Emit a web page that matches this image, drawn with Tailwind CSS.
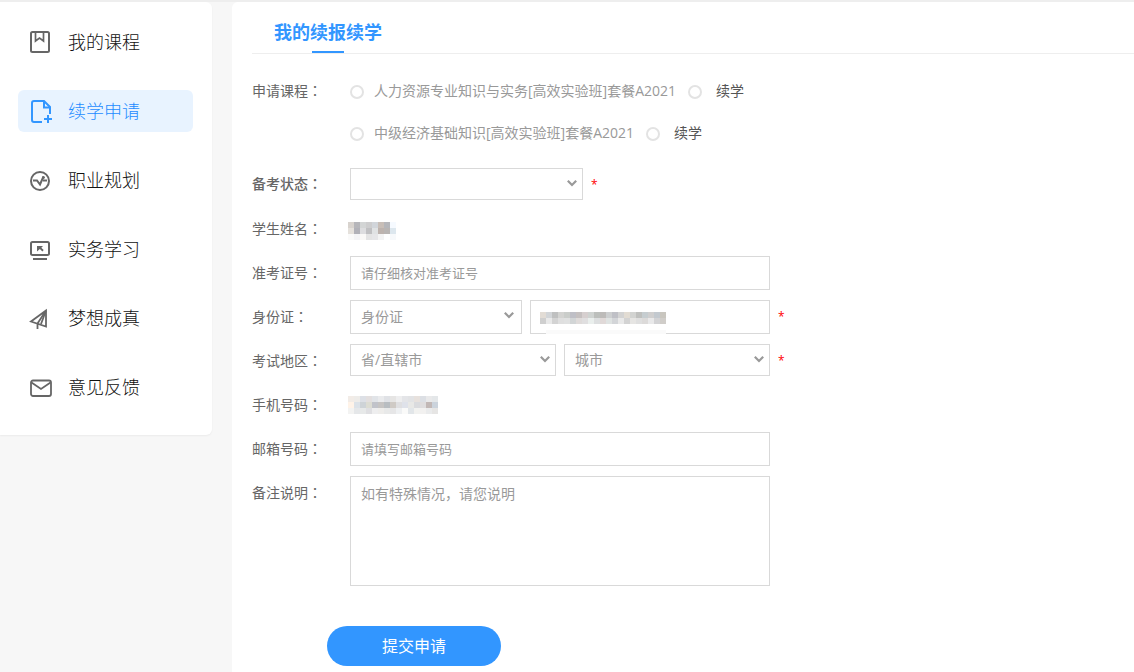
<!DOCTYPE html>
<html lang="zh-CN">
<head>
    <meta charset="UTF-8">
    <meta name="viewport" content="width=device-width, initial-scale=1.0">
    <title>我的续报续学</title>
    <script src="https://cdn.jsdelivr.net/npm/@tailwindcss/browser@4"></script>
</head>
<body class="min-h-screen border-t-2 border-[#eeeeee] bg-[#f7f7f7] font-['Open_Sans','Noto_Sans_CJK_SC',sans-serif] text-sm text-[#666666] flex items-start gap-5">

    <!-- 侧边菜单 -->
    <nav class="w-[212px] shrink-0 rounded-r-md bg-white pt-[19px] pb-[27px] pl-[18px] pr-[19px] flex flex-col gap-[27px] text-lg font-light text-[#111111] shadow-xs shadow-black/5">
        <a href="#" class="flex h-[42px] items-center gap-4 rounded-md pl-[10px]">
            <svg class="size-6 text-[#666666]" viewBox="0 0 24 24" fill="none" stroke="currentColor" stroke-width="2">
                <rect x="3" y="2" width="18" height="20" rx="1.5"/>
                <path d="M7.500 2v9l4-3 4 3V2" stroke-width="1.700"/>
            </svg>
            我的课程
        </a>
        <a href="#" class="flex h-[42px] items-center gap-4 rounded-md bg-[#e8f3ff] pl-[10px] text-[#1e8cff]">
            <svg class="size-6 text-[#3296ff]" viewBox="0 0 24 24" fill="none" stroke="currentColor" stroke-width="2">
                <path d="M14 23H6a2 2 0 0 1-2-2V4a2 2 0 0 1 2-2h10l6 6v7"/>
                <path d="M16 2v6.500h6M20 16v8M16 20h8"/>
            </svg>
            续学申请
        </a>
        <a href="#" class="flex h-[42px] items-center gap-4 rounded-md pl-[10px]">
            <svg class="size-6 text-[#666666]" viewBox="0 0 24 24" fill="none" stroke="currentColor" stroke-width="2">
                <circle cx="12" cy="13" r="9"/>
                <path d="M5 12.500h4l3 4 3.500-8"/>
                <path d="M15 12.500h4"/>
                <circle cx="15.500" cy="9.500" r="1" fill="currentColor" stroke-width="1"/>
            </svg>
            职业规划
        </a>
        <a href="#" class="flex h-[42px] items-center gap-4 rounded-md pl-[10px]">
            <svg class="size-6 text-[#666666]" viewBox="0 0 24 24" fill="none" stroke="currentColor" stroke-width="2">
                <rect x="3" y="5" width="18" height="13" rx="1.500"/>
                <path d="M5 22h14"/>
                <path d="M9 9h6l-1.700 1.700 2.400 2.400-1.300 1.300-2.500-2.500L9 14.500z" fill="currentColor" stroke="none"/>
            </svg>
            实务学习
        </a>
        <a href="#" class="flex h-[42px] items-center gap-4 rounded-md pl-[10px]">
            <svg class="size-6 text-[#666666]" viewBox="0 0 24 24" fill="none" stroke="currentColor" stroke-width="1.800">
                <path d="M18 4.500L3 15.500 18 20.500zM18 4.500L9.500 17.500V23"/>
                <path d="M18 4.500l-5 13.500"/>
            </svg>
            梦想成真
        </a>
        <a href="#" class="flex h-[42px] items-center gap-4 rounded-md pl-[10px]">
            <svg class="size-6 text-[#666666]" viewBox="0 0 24 24" fill="none" stroke="currentColor" stroke-width="1.800">
                <rect x="3" y="5.500" width="20" height="15.500" rx="2"/>
                <path d="M3.500 7.500l9.500 6.500L22.500 7.500"/>
            </svg>
            意见反馈
        </a>
    </nav>

    <!-- 续学申请表单 -->
    <main class="min-h-[670px] flex-1 rounded-tl-md bg-white pl-5">
        <div class="border-b border-[#eeeeee] pl-[22px]">
            <h1 class="relative inline-block h-[51px] text-lg leading-[60px] font-bold text-[#3296ff]">
                我的续报续学
                <span class="absolute bottom-0 left-1/2 h-0.5 w-8 -translate-x-1/2 bg-[#3296ff]"></span>
            </h1>
        </div>

        <form class="pt-4">
            <fieldset class="mb-3.5 flex">
                <legend class="float-left w-[98px] leading-[42px]">申请课程<span lang="zh-TW">：</span></legend>
                <div>
                    <div class="flex h-[42px] items-center gap-2.5 text-[#999999]">
                        <input id="course1" type="radio" name="course" class="mt-0.5 size-3.5 appearance-none rounded-full border-2 border-[#e3e3e3] checked:border-[#3296ff]">
                        <label for="course1">人力资源专业知识与实务[高效实验班]套餐A2021</label>
                        <label class="ml-0.5 flex items-center gap-3.5 text-[#555555]"><input type="radio" name="type1" class="mt-0.5 size-3.5 appearance-none rounded-full border-2 border-[#e3e3e3] checked:border-[#3296ff]">续学</label>
                    </div>
                    <div class="flex h-[42px] items-center gap-2.5 text-[#999999]">
                        <input id="course2" type="radio" name="course" class="mt-0.5 size-3.5 appearance-none rounded-full border-2 border-[#e3e3e3] checked:border-[#3296ff]">
                        <label for="course2">中级经济基础知识[高效实验班]套餐A2021</label>
                        <label class="ml-0.5 flex items-center gap-3.5 text-[#555555]"><input type="radio" name="type2" class="mt-0.5 size-3.5 appearance-none rounded-full border-2 border-[#e3e3e3] checked:border-[#3296ff]">续学</label>
                    </div>
                </div>
            </fieldset>

            <div class="flex flex-col gap-2.5">
                <div class="flex h-[34px]">
                    <label for="status" class="w-[98px] leading-8 font-medium">备考状态<span lang="zh-TW">：</span></label>
                    <div class="relative h-8 w-[233px]">
                        <select id="status" class="size-full appearance-none border border-[#d9d9d9] bg-white px-2.5 text-[#999999]"><option></option></select>
                        <svg class="pointer-events-none absolute top-2.5 right-1.5 size-2.5" viewBox="0 0 10 10" fill="none" stroke="#999999" stroke-width="2.200"><path d="M0.800 2.800L5 7l4.200-4.200"/></svg>
                    </div>
                    <span class="ml-2 text-xs leading-[34px] text-[#ff0000]">*</span>
                </div>
                <div class="flex h-[34px]">
                    <span class="w-[98px] leading-[34px]">学生姓名<span lang="zh-TW">：</span></span>
                    <svg class="mosaic mt-2.5 -ml-0.5 h-[18px] w-12" data-rows="d8d3ce b6b6ba d3d5d5 cdcdce d1d5da c8beb7 b5b6ba f6faff|e5e1dc b1b1b8 dddddf c0c0c2 e0e2e3 bdb3ae b9b5b3 dde7ee|fafafa f4f4f6 faf9f7 e4e4e4 e6e6e8 f4f4f4 ffffff f7f9fb"></svg>
                </div>
                <div class="flex h-[34px]">
                    <label for="ticket" class="w-[98px] leading-[34px]">准考证号<span lang="zh-TW">：</span></label>
                    <input id="ticket" type="text" placeholder="请仔细核对准考证号" class="w-[420px] border border-[#d9d9d9] px-2.5 text-[13px] placeholder:text-[#999999]">
                </div>
                <div class="flex h-[34px]">
                    <label for="idtype" class="w-[98px] leading-[34px]">身份证<span lang="zh-TW">：</span></label>
                    <div class="relative w-[172px]">
                        <select id="idtype" class="size-full appearance-none border border-[#d9d9d9] bg-white px-2.5 text-[#999999]"><option>身份证</option></select>
                        <svg class="pointer-events-none absolute top-2.5 right-2 size-2.5" viewBox="0 0 10 10" fill="none" stroke="#999999" stroke-width="2.200"><path d="M0.800 2.800L5 7l4.200-4.200"/></svg>
                    </div>
                    <div class="relative ml-2 w-60">
                        <input type="text" aria-label="身份证号码" class="size-full border border-[#d9d9d9] px-2.5">
                        <svg class="mosaic absolute top-3 left-2.5 h-3 w-[126px]" data-rows="e2dcd5 d2d5d8 bfc0c0 d3d3d1 cacdca bfbfc6 c5c0c0 d6cfcf cfd3d1 bcbfbc bdbbb9 cdcfd0 bfc0c6 d3d3d3 e2dcd3 d2d3d1 bfc0be c6cdd0 d0cfcf c3c9cf c9c6bf|cfcfcf e9e9e9 d3d3d3 dfdfdf e0e1e1 d2d5d6 dfdbda e0dfe0 eaefed dddfe0 e0d9d8 dfe3e2 d3d5d8 e9e9e9 d3d3d3 e6e5e3 dfdfdf dcdad9 e9e9ea d3d3d5 d0cdc9"></svg>
                        <span class="absolute bottom-0 left-4 h-1 w-[120px] bg-[#fafafa]"></span>
                    </div>
                    <span class="ml-2 text-xs leading-[34px] text-[#ff0000]">*</span>
                </div>
                <div class="flex h-[34px]">
                    <label for="province" class="w-[98px] leading-[34px]">考试地区<span lang="zh-TW">：</span></label>
                    <div class="relative h-8 w-[206px]">
                        <select id="province" class="size-full appearance-none border border-[#d9d9d9] bg-white px-2.5 text-[#999999]"><option>省/直辖市</option></select>
                        <svg class="pointer-events-none absolute top-2.5 right-1.5 size-2.5" viewBox="0 0 10 10" fill="none" stroke="#999999" stroke-width="2.200"><path d="M0.800 2.800L5 7l4.200-4.200"/></svg>
                    </div>
                    <div class="relative ml-2 h-8 w-[206px]">
                        <select aria-label="城市" class="size-full appearance-none border border-[#d9d9d9] bg-white px-2.5 text-[#999999]"><option>城市</option></select>
                        <svg class="pointer-events-none absolute top-2.5 right-1.5 size-2.5" viewBox="0 0 10 10" fill="none" stroke="#999999" stroke-width="2.200"><path d="M0.800 2.800L5 7l4.200-4.200"/></svg>
                    </div>
                    <span class="ml-2 text-xs leading-[34px] text-[#ff0000]">*</span>
                </div>
                <div class="flex h-[34px]">
                    <span class="w-[98px] leading-[34px]">手机号码<span lang="zh-TW">：</span></span>
                    <svg class="mosaic mt-2 -ml-0.5 h-[18px] w-[90px]" data-rows="f2ece7 eeece9 dde0e6 e3dfdf e1e4e8 eaebed e0e2e6 e6e5e4 eeeeef e4e5e8 e2e3e5 e7e1dd dcdfe4 e9e9ea e4e7e9|fff3e8 dce2e8 ced3d7 dcdcd3 c1c3ca c6c4c3 b8bdc1 cfcac5 dfdfe1 dfe2ea e8e8e6 dadbde dfddde c2b8b6 cbd3dc|f3f3f2 e5e7e9 e7e9e9 dfdfe2 eeeeef eeedeb e8e9e9 e6e6e7 eef0f2 fafaf9 e2e6e9 f2f2f0 f2f1f0 eaebec e6e5e4"></svg>
                </div>
                <div class="flex h-[34px]">
                    <label for="email" class="w-[98px] leading-[34px]">邮箱号码<span lang="zh-TW">：</span></label>
                    <input id="email" type="text" placeholder="请填写邮箱号码" class="w-[420px] border border-[#d9d9d9] px-2.5 text-[13px] placeholder:text-[#999999]">
                </div>
                <div class="flex">
                    <label for="remark" class="w-[98px] leading-[34px]">备注说明<span lang="zh-TW">：</span></label>
                    <textarea id="remark" placeholder="如有特殊情况，请您说明" class="h-[110px] w-[420px] resize-none border border-[#d9d9d9] px-2.5 py-[7px] placeholder:text-[#999999]"></textarea>
                </div>
            </div>

            <button type="submit" class="mt-10 mb-1.5 ml-[75px] block h-10 w-[174px] rounded-full bg-[#3296ff] text-base text-white">提交申请</button>
        </form>
    </main>

    <script>
        // 隐私信息打码，每格 6px
        document.querySelectorAll('.mosaic').forEach(svg => {
            svg.dataset.rows.split('|').forEach((row, y) => {
                row.split(' ').forEach((color, x) => {
                    const rect = document.createElementNS('http://www.w3.org/2000/svg', 'rect');
                    rect.setAttribute('x', x * 6);
                    rect.setAttribute('y', y * 6);
                    rect.setAttribute('width', 6);
                    rect.setAttribute('height', 6);
                    rect.setAttribute('fill', '#' + color);
                    svg.appendChild(rect);
                });
            });
        });
    </script>
</body>
</html>
